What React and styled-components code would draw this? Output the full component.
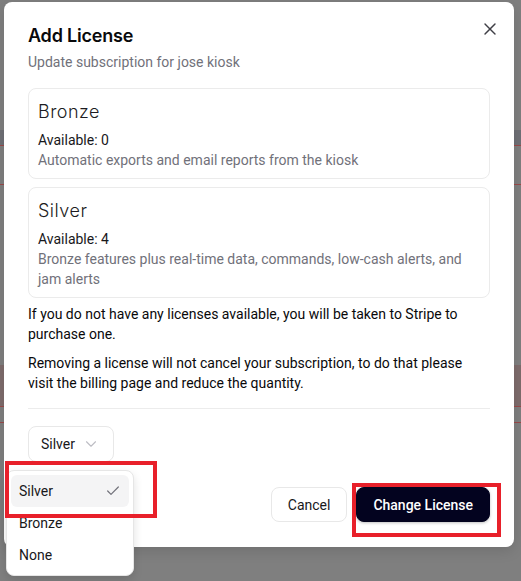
import React from 'react'
import styled, { createGlobalStyle } from 'styled-components'
import { X, Check, ChevronDown } from 'lucide-react'

const GlobalStyle = createGlobalStyle`
  body {
    margin: 0;
    font-family: Roboto, "Liberation Sans", sans-serif;
    color: #09090b;
  }
`

// dimmed page behind the dialog, with the table rules showing through
const Backdrop = styled.div`
  position: relative;
  min-height: 100vh;
  box-sizing: border-box;
  padding: 2px 0 0 4px;
  background:
    linear-gradient(#6f7076, #6f7076) 0 130px / 100% 15px no-repeat,
    linear-gradient(#9a4a4a, #9a4a4a) 0 145px / 100% 1px no-repeat,
    linear-gradient(#9a4a4a, #9a4a4a) 0 184px / 100% 1px no-repeat,
    linear-gradient(#7e6c6c, #7e6c6c) 0 365px / 100% 41px no-repeat,
    linear-gradient(#9a4a4a, #9a4a4a) 0 406px / 100% 1px no-repeat,
    linear-gradient(#9a4a4a, #9a4a4a) 0 422px / 100% 1px no-repeat,
    #7f7f7f;
  overflow: hidden;
`

const Dialog = styled.div`
  position: relative;
  width: 510px;
  box-sizing: border-box;
  padding: 22px 24px 25px;
  background: #fff;
  border-radius: 8px;
  box-shadow: 0 4px 14px rgba(0, 0, 0, 0.12);
`

const CloseButton = styled.button`
  position: absolute;
  top: 17px;
  right: 14px;
  display: flex;
  padding: 0;
  border: 0;
  background: none;
  color: #3f3f46;
`

const Title = styled.h2`
  margin: 0;
  font-family: Inter, "Liberation Sans", sans-serif;
  font-size: 18px;
  font-weight: 600;
  line-height: 24px;
  letter-spacing: -0.2px;
`

const Subtitle = styled.p`
  margin: 4px 0 0;
  font-size: 14px;
  line-height: 20px;
  color: #71717a;
`

const Plans = styled.div`
  display: flex;
  flex-direction: column;
  gap: 8px;
  margin-top: 16px;
`

const PlanCard = styled.div`
  border: 1px solid #ebebeb;
  border-radius: 8px;
  padding: 9px 9px 8px;
`

const PlanName = styled.div`
  font-family: Inter, "Liberation Sans", sans-serif;
  font-size: 18px;
  font-weight: 300;
  line-height: 28px;
  letter-spacing: 0.5px;
  color: #1c1c22;
  margin-bottom: 4px;
`

const PlanStock = styled.div`
  font-size: 14px;
  line-height: 20px;
  color: #18181b;
`

const PlanText = styled.div`
  font-size: 14px;
  line-height: 20px;
  color: #71717a;
`

const Note = styled.p`
  margin: ${(p) => (p.$first ? '6px' : '9px')} 0 0;
  font-size: 14px;
  line-height: 20px;
  color: #09090b;
`

const Divider = styled.hr`
  margin: 15px 0 0;
  border: 0;
  border-top: 1px solid #ececec;
`

const SelectTrigger = styled.button`
  display: flex;
  align-items: center;
  gap: 7px;
  height: 36px;
  margin-top: 17px;
  padding: 0 13px 0 12px;
  border: 1px solid #e8e8e8;
  border-radius: 8px;
  background: #fff;
  font-family: Roboto, "Liberation Sans", sans-serif;
  font-size: 14px;
  color: #18181b;
  svg {
    color: #bdbdc4;
  }
`

const Footer = styled.div`
  display: flex;
  justify-content: flex-end;
  gap: 9px;
  margin-top: 25px;
`

const Button = styled.button`
  height: 35px;
  padding: 0 16px;
  border-radius: 8px;
  font-family: Roboto, "Liberation Sans", sans-serif;
  font-size: 14px;
  font-weight: ${(p) => (p.$primary ? 500 : 400)};
  border: 1px solid ${(p) => (p.$primary ? '#03031f' : '#e8e8e8')};
  background: ${(p) => (p.$primary ? '#03031f' : '#fff')};
  color: ${(p) => (p.$primary ? '#fff' : '#18181b')};
  box-shadow: ${(p) => (p.$primary ? '0 1px 3px rgba(0,0,0,0.25)' : 'none')};
`

const Menu = styled.div`
  position: absolute;
  left: 6px;
  top: 470px;
  width: 128px;
  box-sizing: border-box;
  padding: 4px;
  background: #fff;
  border: 1px solid #e6e6e6;
  border-radius: 8px;
  box-shadow: 0 4px 10px rgba(0, 0, 0, 0.12);
`

const MenuItem = styled.div`
  display: flex;
  align-items: center;
  justify-content: space-between;
  height: 32px;
  padding: 0 8px;
  border-radius: 6px;
  font-size: 14px;
  color: #18181b;
  background: ${(p) => (p.$active ? '#f4f4f5' : 'transparent')};
  svg {
    color: #71717a;
  }
`

// red markers drawn on top of the dialog
const Marker = styled.div`
  position: absolute;
  box-sizing: border-box;
  border: 4px solid #e8202a;
  left: ${(p) => p.$x}px;
  top: ${(p) => p.$y}px;
  width: ${(p) => p.$w}px;
  height: ${(p) => p.$h}px;
`

const plans = [
  { name: 'Bronze', available: 0, text: 'Automatic exports and email reports from the kiosk' },
  {
    name: 'Silver',
    available: 4,
    text: 'Bronze features plus real-time data, commands, low-cash alerts, and jam alerts',
  },
]

const options = ['Silver', 'Bronze', 'None']

export default function App() {
  const selected = 'Silver'
  return (
    <Backdrop>
      <GlobalStyle />
      <Dialog>
        <CloseButton>
          <X size={20} strokeWidth={1.7} />
        </CloseButton>
        <Title>Add License</Title>
        <Subtitle>Update subscription for jose kiosk</Subtitle>
        <Plans>
          {plans.map((plan) => (
            <PlanCard key={plan.name}>
              <PlanName>{plan.name}</PlanName>
              <PlanStock>Available: {plan.available}</PlanStock>
              <PlanText>{plan.text}</PlanText>
            </PlanCard>
          ))}
        </Plans>
        <Note $first>
          If you do not have any licenses available, you will be taken to Stripe to purchase one.
        </Note>
        <Note>
          Removing a license will not cancel your subscription, to do that please visit the billing
          page and reduce the quantity.
        </Note>
        <Divider />
        <SelectTrigger>
          {selected}
          <ChevronDown size={18} strokeWidth={1.5} />
        </SelectTrigger>
        <Footer>
          <Button>Cancel</Button>
          <Button $primary>Change License</Button>
        </Footer>
      </Dialog>
      <Menu>
        {options.map((o) => (
          <MenuItem key={o} $active={o === selected}>
            {o}
            {o === selected && <Check size={16} strokeWidth={1.8} />}
          </MenuItem>
        ))}
      </Menu>
      <Marker $x={5} $y={461} $w={152} $h={57} />
      <Marker $x={352} $y={483} $w={149} $h={54} />
    </Backdrop>
  )
}
